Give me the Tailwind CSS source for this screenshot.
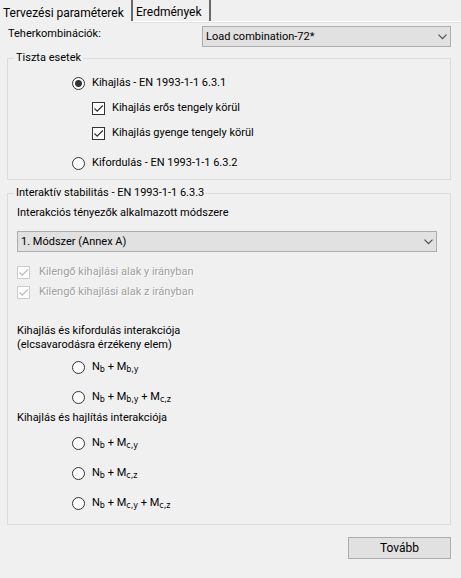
<!DOCTYPE html>
<html lang="hu">
<head>
<meta charset="utf-8">
<meta name="viewport" content="width=device-width, initial-scale=1">
<title>Tervezési paraméterek</title>
<script src="https://cdn.jsdelivr.net/npm/@tailwindcss/browser@4"></script>
</head>
<body class="min-h-screen bg-[#f0f0f0] font-['Roboto','Open_Sans',sans-serif] text-[11px] leading-[16px] text-black">
<div role="tablist" class="flex h-[23px] text-[12px]">
  <button type="button" role="tab" aria-selected="true" class="w-[131px] pl-[3px] pt-[2px] text-left">Tervezési paraméterek</button>
  <button type="button" role="tab" aria-selected="false" class="h-[21px] w-[80px] border-x-2 border-[#696969] pl-[3px] pt-[2px] text-left">Eredmények</button>
  <div class="-ml-[79px] mt-[21px] h-[2px] flex-1 border-b border-[#e3e3e3] bg-white"></div>
</div>
<form class="pt-[3px] pr-[10px] pl-[7px]">
  <div class="flex items-start justify-between">
    <label for="combo" class="pl-px">Teherkombinációk:</label>
    <div class="relative w-[249px]">
      <select id="combo" class="block h-[21px] w-full appearance-none border border-[#adadad] bg-[#e1e1e1] pl-[3px] leading-[16px]"><option>Load combination-72*</option></select>
      <svg class="pointer-events-none absolute top-2 right-1 h-[6px] w-[9px]" viewBox="0 0 9 6" fill="none" stroke="#505050" stroke-width="1.2"><path d="M.5.7 4.5 4.7 8.5.7"/></svg>
    </div>
  </div>

  <fieldset class="mt-[3px] border border-[#dcdcdc] px-[9px] pb-2">
    <legend class="-ml-[3px] px-[2px]">Tiszta esetek</legend>
    <div class="flex flex-col gap-[9px] pt-[9px] pl-[55px]">
      <label class="flex items-center gap-[7px]"><input type="radio" name="mode" checked class="size-[13px] appearance-none rounded-full border border-[#333] bg-white checked:bg-[radial-gradient(circle,#333_3px,#fff_4px)]">Kihajlás - EN 1993-1-1 6.3.1</label>
      <label class="ml-5 flex items-center gap-[7px]"><span class="relative size-[13px]"><input type="checkbox" checked class="block size-[13px] appearance-none border border-[#333] bg-white"><svg class="pointer-events-none absolute inset-0" viewBox="0 0 13 13" fill="none" stroke="#333" stroke-width="1.3"><path d="M2.5 6.5 5.2 9.2 10.8 3.5"/></svg></span>Kihajlás erős tengely körül</label>
      <label class="ml-5 flex items-center gap-[7px]"><span class="relative size-[13px]"><input type="checkbox" checked class="block size-[13px] appearance-none border border-[#333] bg-white"><svg class="pointer-events-none absolute inset-0" viewBox="0 0 13 13" fill="none" stroke="#333" stroke-width="1.3"><path d="M2.5 6.5 5.2 9.2 10.8 3.5"/></svg></span>Kihajlás gyenge tengely körül</label>
      <label class="mt-[5px] flex items-center gap-[7px]"><input type="radio" name="mode" class="size-[13px] appearance-none rounded-full border border-[#333] bg-white checked:bg-[radial-gradient(circle,#333_3px,#fff_4px)]">Kifordulás - EN 1993-1-1 6.3.2</label>
    </div>
  </fieldset>

  <fieldset class="mt-[5px] border border-[#dcdcdc] px-[9px] pb-[13px]">
    <legend class="-ml-[3px] px-[2px]">Interaktív stabilitás - EN 1993-1-1 6.3.3</legend>
    <label for="method" class="mt-1 block">Interakciós tényezők alkalmazott módszere</label>
    <div class="relative mt-[10px] mr-1">
      <select id="method" class="block h-[21px] w-full appearance-none border border-[#adadad] bg-[#e1e1e1] pl-[3px] leading-[16px]"><option>1. Módszer (Annex A)</option></select>
      <svg class="pointer-events-none absolute top-2 right-1 h-[6px] w-[9px]" viewBox="0 0 9 6" fill="none" stroke="#505050" stroke-width="1.2"><path d="M.5.7 4.5 4.7 8.5.7"/></svg>
    </div>
    <div class="mt-3 flex flex-col gap-1 text-[#a0a0a0] [text-shadow:1px_1px_0_#fff]">
      <label class="flex items-center gap-[9px]"><span class="relative size-[13px]"><input type="checkbox" checked disabled class="block size-[13px] appearance-none border border-[#ccc] bg-white"><svg class="pointer-events-none absolute inset-0" viewBox="0 0 13 13" fill="none" stroke="#bbb" stroke-width="1.3"><path d="M2.5 6.5 5.2 9.2 10.8 3.5"/></svg></span>Kilengő kihajlási alak y irányban</label>
      <label class="flex items-center gap-[9px]"><span class="relative size-[13px]"><input type="checkbox" checked disabled class="block size-[13px] appearance-none border border-[#ccc] bg-white"><svg class="pointer-events-none absolute inset-0" viewBox="0 0 13 13" fill="none" stroke="#bbb" stroke-width="1.3"><path d="M2.5 6.5 5.2 9.2 10.8 3.5"/></svg></span>Kilengő kihajlási alak z irányban</label>
    </div>
    <p class="mt-6 leading-[14px]">Kihajlás és kifordulás interakciója<br>(elcsavarodásra érzékeny elem)</p>
    <div class="mt-[7px] flex flex-col gap-[14px] pl-[55px] [&_sub]:font-['DejaVu_Sans',sans-serif] [&_sub]:text-[8px]">
      <label class="flex h-4 items-center gap-[7px]"><input type="radio" name="interaction" class="size-[13px] appearance-none rounded-full border border-[#333] bg-white checked:bg-[radial-gradient(circle,#333_3px,#fff_4px)]"><span>N<sub>b</sub> + M<sub>b,y</sub></span></label>
      <label class="flex h-4 items-center gap-[7px]"><input type="radio" name="interaction" class="size-[13px] appearance-none rounded-full border border-[#333] bg-white checked:bg-[radial-gradient(circle,#333_3px,#fff_4px)]"><span>N<sub>b</sub> + M<sub>b,y</sub> + M<sub>c,z</sub></span></label>
    </div>
    <p class="mt-[5px]">Kihajlás és hajlítás interakciója</p>
    <div class="mt-[9px] flex flex-col gap-[14px] pl-[55px] [&_sub]:font-['DejaVu_Sans',sans-serif] [&_sub]:text-[8px]">
      <label class="flex h-4 items-center gap-[7px]"><input type="radio" name="interaction" class="size-[13px] appearance-none rounded-full border border-[#333] bg-white checked:bg-[radial-gradient(circle,#333_3px,#fff_4px)]"><span>N<sub>b</sub> + M<sub>c,y</sub></span></label>
      <label class="flex h-4 items-center gap-[7px]"><input type="radio" name="interaction" class="size-[13px] appearance-none rounded-full border border-[#333] bg-white checked:bg-[radial-gradient(circle,#333_3px,#fff_4px)]"><span>N<sub>b</sub> + M<sub>c,z</sub></span></label>
      <label class="flex h-4 items-center gap-[7px]"><input type="radio" name="interaction" class="size-[13px] appearance-none rounded-full border border-[#333] bg-white checked:bg-[radial-gradient(circle,#333_3px,#fff_4px)]"><span>N<sub>b</sub> + M<sub>c,y</sub> + M<sub>c,z</sub></span></label>
    </div>
  </fieldset>

  <div class="mt-3 flex justify-end">
    <button type="button" class="h-[22px] w-[103px] border border-[#adadad] bg-[#e1e1e1] text-[12px]">Tovább</button>
  </div>
</form>
</body>
</html>
